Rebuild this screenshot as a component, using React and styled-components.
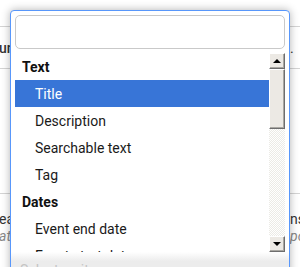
import React from "react";
import styled, { createGlobalStyle } from "styled-components";

const GlobalStyle = createGlobalStyle`
  html, body {
    margin: 0;
    padding: 0;
    background: #fff;
    overflow: hidden;
  }
  body {
    font-family: Roboto, "Liberation Sans", sans-serif;
  }
`;

const Page = styled.div`
  position: relative;
  width: 300px;
  height: 267px;
  overflow: hidden;
`;

// page behind the open dropdown
const Backdrop = styled.div`
  display: flex;
  flex-direction: column;
  width: 300px;
`;

const BackRow = styled.div`
  display: flex;
  justify-content: space-between;
  align-items: ${(p) => p.$align || "center"};
  height: ${(p) => p.$h}px;
  border-bottom: ${(p) => (p.$line ? "1px solid #d4d4d4" : "none")};
  box-sizing: border-box;
  font-size: 14px;
  color: ${(p) => p.$color || "#333"};
  font-style: ${(p) => (p.$italic ? "italic" : "normal")};
  white-space: nowrap;
`;

const BackText = styled.span`
  margin-left: -1px;
  font-weight: ${(p) => (p.$bold ? 500 : 400)};
`;

const BackRight = styled.span`
  width: 10px;
  overflow: hidden;
`;

const Dropdown = styled.div`
  position: absolute;
  left: 10px;
  top: 10px;
  width: 280px;
  height: 270px;
  box-sizing: border-box;
  background: #fff;
  border: 1px solid #5897fb;
  border-radius: 4px 4px 0 0;
  box-shadow: 0 0 8px rgba(0, 0, 0, 0.3);
  padding: 4px;
  display: flex;
  flex-direction: column;
`;

const Search = styled.input`
  flex-shrink: 0;
  height: 34px;
  box-sizing: border-box;
  border: 1px solid #c9c9c9;
  border-radius: 5px;
  outline: none;
  margin: 0;
  padding: 4px 8px;
  font: inherit;
`;

const ListWrap = styled.div`
  flex-shrink: 0;
  display: flex;
  height: 199px;
  margin-top: 4px;
`;

const Results = styled.ul`
  flex: 1;
  list-style: none;
  margin: 0;
  padding: 0;
  overflow: hidden;
`;

const Group = styled.li`
  height: 27px;
  line-height: 28px;
  padding-left: 7px;
  font-weight: 700;
  font-size: 14px;
  color: #111;
`;

const Option = styled.li`
  height: 27px;
  line-height: 28px;
  padding-left: 20px;
  font-size: 14px;
  color: ${(p) => (p.$active ? "#fff" : "#1a1a1a")};
  background: ${(p) => (p.$active ? "#3875d7" : "transparent")};
`;

const Scrollbar = styled.div`
  width: 16px;
  display: flex;
  flex-direction: column;
  background-color: #fff;
  background-image: repeating-conic-gradient(#ecebe6 0% 25%, #fff 0% 50%);
  background-size: 2px 2px;
`;

const ScrollButton = styled.div`
  height: 16px;
  flex-shrink: 0;
  box-sizing: border-box;
  background: #ece9e4;
  border-top: 1px solid #fff;
  border-left: 1px solid #fff;
  border-right: 1px solid #6e6e6e;
  border-bottom: 1px solid #6e6e6e;
  box-shadow: inset -1px -1px 0 #a9a7a2;
  display: flex;
  align-items: center;
  justify-content: center;
`;

const Thumb = styled(ScrollButton)`
  height: 60px;
`;

const Track = styled.div`
  flex: 1;
`;

const Arrow = styled.span`
  width: 0;
  height: 0;
  border-left: 4px solid transparent;
  border-right: 4px solid transparent;
  ${(p) =>
    p.$down ? "border-top: 4px solid #000;" : "border-bottom: 4px solid #000;"}
`;

const Footer = styled.div`
  flex: 1;
  min-height: 0;
  overflow: hidden;
  margin: 0 -4px;
  padding: 10px 9px 0;
  background: linear-gradient(#fff, #ececec 40%);
  color: #c4c4c4;
  font-size: 14px;
  white-space: nowrap;
`;

export default function App() {
  return (
    <Page>
      <GlobalStyle />
      <Backdrop>
        <BackRow $h={27} $line />
        <BackRow $h={42} $line>
          <BackText $bold>un</BackText>
          <BackRight>.</BackRight>
        </BackRow>
        <BackRow $h={125} $line />
        <BackRow $h={33} $align="flex-end">
          <BackText>ea</BackText>
          <BackRight>ns</BackRight>
        </BackRow>
        <BackRow $h={18} $color="#888" $italic>
          <BackText>at</BackText>
          <BackRight>po</BackRight>
        </BackRow>
      </Backdrop>

      <Dropdown>
        <Search type="text" />
        <ListWrap>
          <Results>
            <Group>Text</Group>
            <Option $active>Title</Option>
            <Option>Description</Option>
            <Option>Searchable text</Option>
            <Option>Tag</Option>
            <Group>Dates</Group>
            <Option>Event end date</Option>
            <Option>Event start date</Option>
          </Results>
          <Scrollbar>
            <ScrollButton>
              <Arrow />
            </ScrollButton>
            <Thumb />
            <Track />
            <ScrollButton>
              <Arrow $down />
            </ScrollButton>
          </Scrollbar>
        </ListWrap>
        <Footer>Select an item</Footer>
      </Dropdown>
    </Page>
  );
}
